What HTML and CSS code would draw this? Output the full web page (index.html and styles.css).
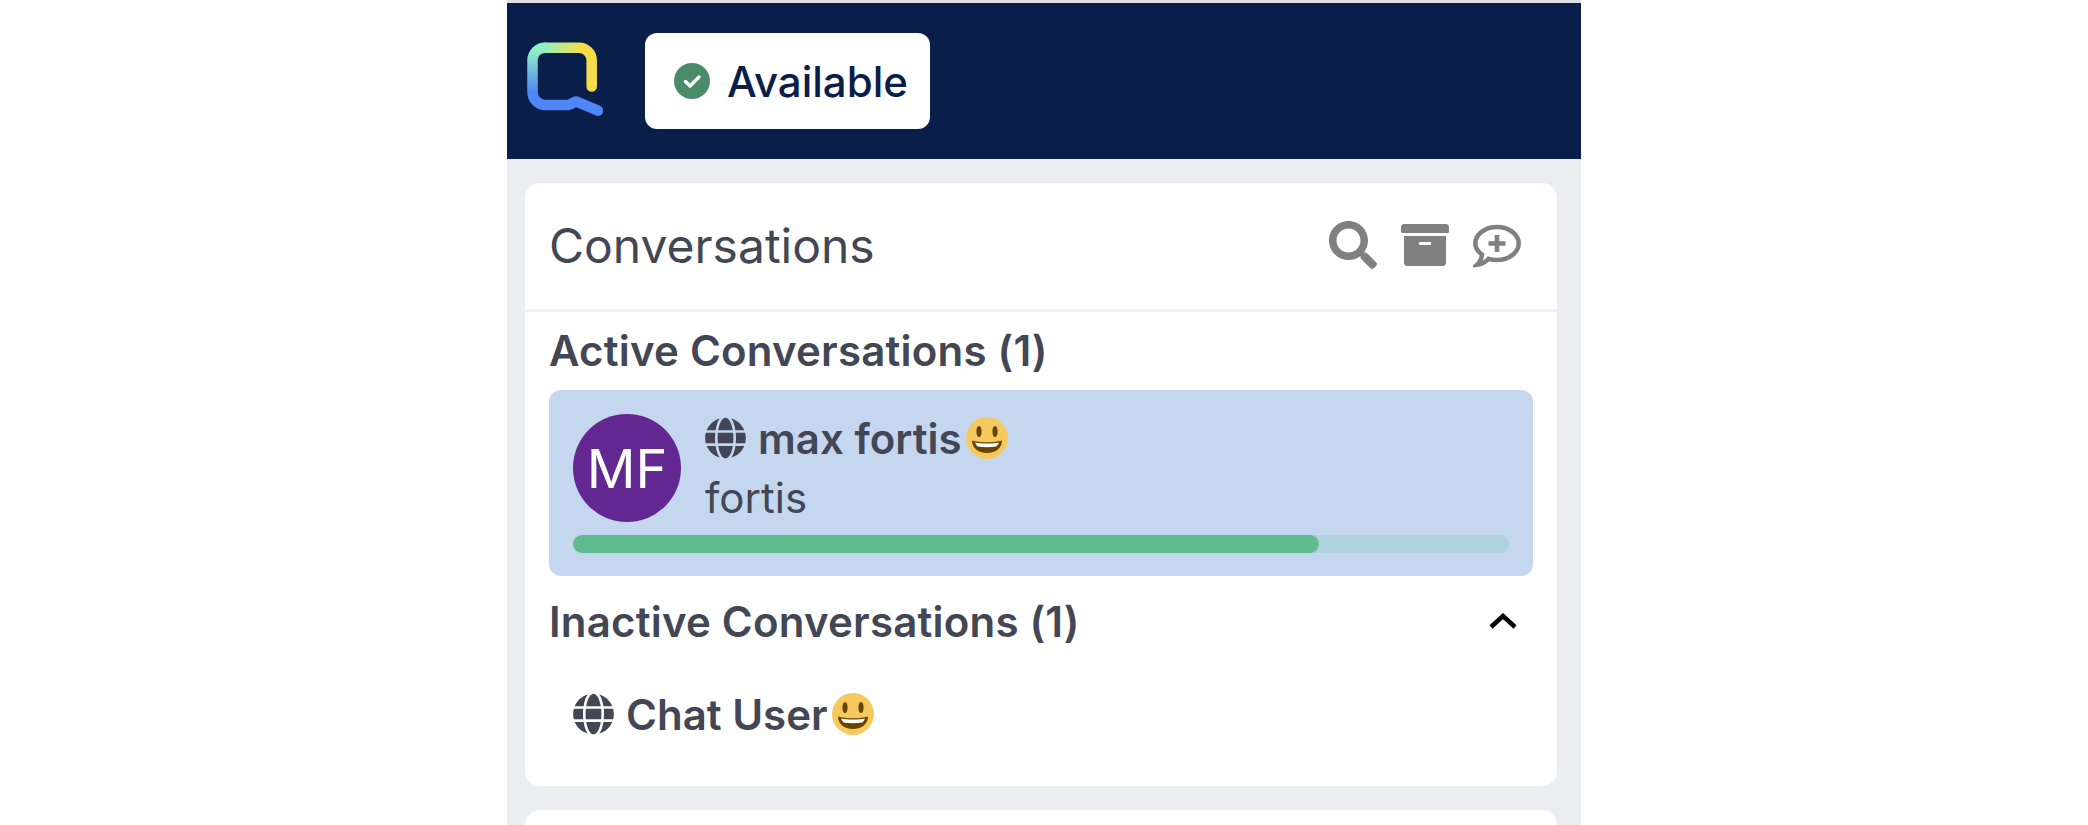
FILE: index.html
```html
<!DOCTYPE html>
<html lang="en">
<head>
  <meta charset="UTF-8" />
  <meta name="viewport" content="width=device-width, initial-scale=1" />
  <title>Conversations</title>
  <link rel="stylesheet" href="styles.css">
</head>
<body>
  <svg class="sprites" width="0" height="0">
    <defs>
      <symbol id="globe" viewBox="0 0 496 512">
        <path d="M336.5 160C322 70.7 287.8 8 248 8s-74 62.7-88.5 152h177zM152 256c0 22.2 1.2 43.5 3.3 64h185.3c2.1-20.5 3.3-41.8 3.3-64s-1.2-43.5-3.3-64H155.3c-2.1 20.5-3.3 41.8-3.3 64zm324.7-96c-28.6-67.9-86.5-120.4-158-141.6 24.4 33.8 41.2 84.7 50 141.6h108zM177.2 18.4C105.8 39.6 47.8 92.1 19.3 160h108c8.7-56.9 25.5-107.8 49.9-141.6zM487.4 192H372.7c2.1 21 3.3 42.5 3.3 64s-1.2 43-3.3 64h114.6c5.5-20.5 8.6-41.8 8.6-64s-3.1-43.5-8.5-64zM120 256c0-21.5 1.2-43 3.3-64H8.6C3.2 212.5 0 233.8 0 256s3.2 43.5 8.6 64h114.6c-2-21-3.2-42.5-3.2-64zm39.5 96c14.5 89.3 48.7 152 88.5 152s74-62.7 88.5-152h-177zm159.3 141.6c71.4-21.2 129.4-73.7 158-141.6h-108c-8.8 56.9-25.6 107.8-50 141.6zM19.3 352c28.6 67.9 86.5 120.4 158 141.6-24.4-33.8-41.2-84.7-50-141.6h-108z"/>
      </symbol>
      <symbol id="smiley" viewBox="0 0 42 42">
        <circle cx="21" cy="21" r="21" fill="#f6c95f"/>
        <ellipse cx="13" cy="14.5" rx="2.6" ry="5.5" fill="#664500"/>
        <ellipse cx="29" cy="14.5" rx="2.6" ry="5.5" fill="#664500"/>
        <path d="M6 23.5c4 1.2 9 1.8 15 1.8s11-.6 15-1.8c0 7-6 12.5-15 12.5S6 30.5 6 23.5z" fill="#664500"/>
        <path d="M9 25.5c3.5.7 7.5 1 12 1s8.5-.3 12-1c-.6 1.6-1.5 3-2.6 4-2.8.5-6 .7-9.4.7s-6.6-.2-9.4-.7c-1.1-1-2-2.4-2.6-4z" fill="#fff"/>
      </symbol>
    </defs>
  </svg>

  <div class="app">
    <header class="topbar">
      <svg class="logo" viewBox="0 0 78 78" width="78" height="78">
        <defs>
          <linearGradient id="logoLeft" gradientUnits="userSpaceOnUse" x1="0" y1="62" x2="0" y2="8">
            <stop offset="0" stop-color="#4f86f7"/>
            <stop offset="0.2" stop-color="#4f86f7"/>
            <stop offset="1" stop-color="#8ff2c4"/>
          </linearGradient>
          <linearGradient id="logoTop" gradientUnits="userSpaceOnUse" x1="18" y1="0" x2="56" y2="0">
            <stop offset="0" stop-color="#8ff2c4"/>
            <stop offset="1" stop-color="#f5dc4a"/>
          </linearGradient>
        </defs>
        <path class="logo-stroke" stroke="url(#logoLeft)" d="M20 5.700A12.500 12.500 0 0 0 7.500 18.200V50A13 13 0 0 0 20.500 63H41c3 0 5-.8 7-2.300l3-1.300 22 9.300"/>
        <path class="logo-stroke" stroke="url(#logoTop)" d="M20 5.700h34A12.700 12.700 0 0 1 66.700 18.400V44.500"/>
      </svg>
      <div class="status">
        <svg class="status-icon" viewBox="0 0 36 36" width="36" height="36">
          <circle cx="18" cy="18" r="18" fill="#4a8b6a"/>
          <path d="M11.5 18.500l4.500 4.500 9-9" fill="none" stroke="#fff" stroke-width="3.400" stroke-linecap="round" stroke-linejoin="round"/>
        </svg>
        <span>Available</span>
      </div>
    </header>

    <section class="card">
      <div class="card-head">
        <h2>Conversations</h2>
        <div class="actions">
          <svg viewBox="0 0 512 512" width="48" height="48"><path d="M505 442.7L405.3 343c-4.5-4.5-10.6-7-17-7H372c27.6-35.3 44-79.7 44-128C416 93.1 322.9 0 208 0S0 93.1 0 208s93.1 208 208 208c48.3 0 92.7-16.4 128-44v16.3c0 6.4 2.5 12.5 7 17l99.7 99.7c9.4 9.4 24.6 9.4 33.9 0l28.3-28.3c9.4-9.4 9.4-24.6.1-34zM208 336c-70.7 0-128-57.2-128-128 0-70.7 57.2-128 128-128 70.7 0 128 57.2 128 128 0 70.7-57.2 128-128 128z"/></svg>
          <svg viewBox="0 0 512 512" width="48" height="48"><path d="M32 448c0 17.7 14.3 32 32 32h384c17.7 0 32-14.3 32-32V160H32v288zm160-212c0-6.6 5.4-12 12-12h104c6.6 0 12 5.4 12 12v8c0 6.6-5.4 12-12 12H204c-6.600 0-12-5.400-12-12v-8zM480 32H32C14.300 32 0 46.300 0 64v48c0 8.800 7.200 16 16 16h480c8.800 0 16-7.200 16-16V64c0-17.700-14.300-32-32-32z"/></svg>
          <svg class="chat-plus" viewBox="0 0 48 48" width="48" height="48">
            <path d="M9 33.500C4.800 30.500 2.300 26.800 2.300 22.500 2.300 13.500 12 6 24 6s21.700 7.500 21.700 16.500S36 39 24 39c-3 0-5.800-.4-8.400-1.200-2.500 2.800-6 5.500-11.500 6 3-2.500 4.500-6.500 4.900-10.300z"/>
            <path d="M24 14v17M15.500 22.500h17"/>
          </svg>
        </div>
      </div>

      <h3 class="section-title section-active">Active Conversations (1)</h3>
      <div class="conversation">
        <div class="conversation-main">
          <div class="avatar">MF</div>
          <div class="conversation-text">
            <div class="name">
              <svg class="globe"><use href="#globe"/></svg>
              <span>max fortis</span>
              <svg class="smiley"><use href="#smiley"/></svg>
            </div>
            <div class="preview">fortis</div>
          </div>
        </div>
        <div class="progress"><div class="progress-fill" style="width: 79.7%"></div></div>
      </div>

      <div class="section-title section-inactive">
        <h3>Inactive Conversations (1)</h3>
        <svg class="chevron" viewBox="0 0 28 16" width="28" height="16"><path d="M2 14L14 3l12 11"/></svg>
      </div>
      <div class="name inactive-row">
        <svg class="globe"><use href="#globe"/></svg>
        <span>Chat User</span>
        <svg class="smiley"><use href="#smiley"/></svg>
      </div>
    </section>

    <section class="card card-next"></section>
  </div>
</body>
</html>
```

FILE: styles.css
```css
* {
  box-sizing: border-box;
}
html, body {
  height: 100%;
}
body {
  margin: 0;
  background: #fff;
  font-family: 'Inter', sans-serif;
  color: #434654;
  overflow: hidden;
}
h2, h3 {
  margin: 0;
}
.sprites {
  position: absolute;
}
.app {
  width: 1074px;
  height: 825px;
  margin-left: 507px;
  border-top: 3px solid #dfe0e3;
  background: #ebedf1;
  overflow: hidden;
}
.topbar {
  display: flex;
  align-items: center;
  gap: 42px;
  height: 156px;
  padding-left: 18px;
  background: #0a1e4a;
}
.logo-stroke {
  fill: none;
  stroke-width: 10.5;
  stroke-linecap: round;
  stroke-linejoin: round;
}
.status {
  display: flex;
  align-items: center;
  gap: 17px;
  width: 285px;
  height: 96px;
  padding-left: 29px;
  background: #fff;
  border-radius: 12px;
  color: #0a1e4a;
  font-size: 42px;
  font-weight: 500;
}
.card {
  margin: 24px 24px 0 18px;
  height: 603px;
  background: #fff;
  border-radius: 15px;
}
.card-next {
  height: 60px;
}
.card-head {
  display: flex;
  align-items: center;
  justify-content: space-between;
  height: 129px;
  padding: 0 36px 2px 24px;
  border-bottom: 3px solid #f0f1f3;
}
.card-head h2 {
  font-size: 48px;
  font-weight: 400;
}
.actions {
  display: flex;
  gap: 24px;
}
.actions svg {
  fill: #808080;
}
.chat-plus path {
  fill: none;
  stroke: #808080;
  stroke-width: 4.5;
}
.section-title {
  font-size: 42px;
  font-weight: 600;
  letter-spacing: 0.2px;
}
.section-active {
  height: 78px;
  padding: 14px 24px 0;
  line-height: 50px;
}
.section-inactive {
  display: flex;
  align-items: center;
  justify-content: space-between;
  height: 90px;
  padding: 0 40px 0 24px;
}
.section-inactive h3 {
  font-size: 42px;
  font-weight: 600;
}
.chevron path {
  fill: none;
  stroke: #000;
  stroke-width: 4.5;
}
.conversation {
  margin: 0 24px;
  padding: 24px;
  height: 186px;
  background: #c5d7ef;
  border-radius: 12px;
}
.conversation-main {
  display: flex;
  gap: 24px;
}
.avatar {
  display: flex;
  align-items: center;
  justify-content: center;
  flex: none;
  width: 108px;
  height: 108px;
  border-radius: 50%;
  background: #622790;
  color: #fff;
  font-size: 54px;
}
.name {
  display: flex;
  align-items: center;
  height: 48px;
  font-size: 42px;
  font-weight: 600;
}
.globe {
  width: 41px;
  height: 42px;
  margin-right: 12px;
  fill: #434654;
}
.smiley {
  width: 42px;
  height: 42px;
  margin-left: 4px;
}
.preview {
  margin-top: 11px;
  font-size: 42px;
  line-height: 50px;
}
.progress {
  height: 18px;
  margin-top: 12px;
  background: #b0d2dc;
  border-radius: 9px;
}
.progress-fill {
  height: 100%;
  background: #60bb8f;
  border-radius: 9px;
}
.inactive-row {
  margin-top: 24px;
  padding-left: 48px;
}
```
